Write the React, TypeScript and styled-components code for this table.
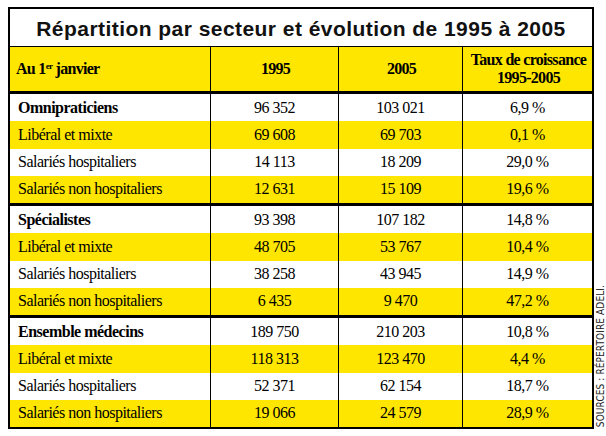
import styled, { createGlobalStyle } from 'styled-components';

const YELLOW = '#ffe600';

type Row = {
  label: string;
  y1995: string;
  y2005: string;
  rate: string;
  bold?: boolean;
};

const GROUPS: Row[][] = [
  [
    { label: 'Omnipraticiens', y1995: '96 352', y2005: '103 021', rate: '6,9 %', bold: true },
    { label: 'Libéral et mixte', y1995: '69 608', y2005: '69 703', rate: '0,1 %' },
    { label: 'Salariés hospitaliers', y1995: '14 113', y2005: '18 209', rate: '29,0 %' },
    { label: 'Salariés non hospitaliers', y1995: '12 631', y2005: '15 109', rate: '19,6 %' },
  ],
  [
    { label: 'Spécialistes', y1995: '93 398', y2005: '107 182', rate: '14,8 %', bold: true },
    { label: 'Libéral et mixte', y1995: '48 705', y2005: '53 767', rate: '10,4 %' },
    { label: 'Salariés hospitaliers', y1995: '38 258', y2005: '43 945', rate: '14,9 %' },
    { label: 'Salariés non hospitaliers', y1995: '6 435', y2005: '9 470', rate: '47,2 %' },
  ],
  [
    { label: 'Ensemble médecins', y1995: '189 750', y2005: '210 203', rate: '10,8 %', bold: true },
    { label: 'Libéral et mixte', y1995: '118 313', y2005: '123 470', rate: '4,4 %' },
    { label: 'Salariés hospitaliers', y1995: '52 371', y2005: '62 154', rate: '18,7 %' },
    { label: 'Salariés non hospitaliers', y1995: '19 066', y2005: '24 579', rate: '28,9 %' },
  ],
];

const GlobalStyle = createGlobalStyle`
  body {
    margin: 0;
    background: #fff;
  }
`;

function App() {
  return (
    <>
      <GlobalStyle />
      <Styled.Page>
        <Styled.Frame>
          <Styled.Title>Répartition par secteur et évolution de 1995 à 2005</Styled.Title>
          <Styled.Table>
            <colgroup>
              <col style={{ width: 201 }} />
              <col style={{ width: 128 }} />
              <col style={{ width: 124 }} />
              <col style={{ width: 129 }} />
            </colgroup>
            <thead>
              <tr>
                <Styled.HeadCell $align="left">
                  Au 1<sup>er</sup> janvier
                </Styled.HeadCell>
                <Styled.HeadCell>1995</Styled.HeadCell>
                <Styled.HeadCell>2005</Styled.HeadCell>
                <Styled.HeadCell $last>
                  Taux de croissance
                  <br />
                  1995-2005
                </Styled.HeadCell>
              </tr>
            </thead>
            <tbody>
              {GROUPS.map((group, g) =>
                group.map((row, i) => {
                  const thick = i === group.length - 1 && g < GROUPS.length - 1;
                  const yellow = i % 2 === 1;
                  return (
                    <Styled.Row key={`${g}-${i}`} $yellow={yellow} $thick={thick}>
                      <Styled.Cell $align="left" $bold={row.bold}>
                        {row.label}
                      </Styled.Cell>
                      <Styled.Cell>{row.y1995}</Styled.Cell>
                      <Styled.Cell>{row.y2005}</Styled.Cell>
                      <Styled.Cell $last>{row.rate}</Styled.Cell>
                    </Styled.Row>
                  );
                }),
              )}
            </tbody>
          </Styled.Table>
        </Styled.Frame>
        <Styled.Source>SOURCES : RÉPERTOIRE ADELI.</Styled.Source>
      </Styled.Page>
    </>
  );
}

const SERIF = `"Liberation Serif", "Times New Roman", serif`;

const Styled = {
  Page: styled.div`
    display: flex;
    align-items: flex-end;
    gap: 2px;
    padding: 7px 0 0 8px;
  `,
  Frame: styled.div`
    flex: 0 0 586px;
    box-sizing: border-box;
    border: 2px solid #000;
    overflow: hidden;
  `,
  Title: styled.div`
    height: 38px;
    border-bottom: 1px solid #000;
    display: flex;
    align-items: center;
    justify-content: center;
    padding-top: 2px;
    box-sizing: border-box;
    font-family: 'Liberation Sans', Arial, sans-serif;
    font-weight: 700;
    font-size: 21px;
    letter-spacing: 0.45px;
    color: #111;
  `,
  Table: styled.table`
    width: 582px;
    table-layout: fixed;
    border-collapse: separate;
    border-spacing: 0;
    color: #000;
  `,
  HeadCell: styled.th<{ $align?: 'left' | 'center'; $last?: boolean }>`
    box-sizing: border-box;
    height: 47px;
    padding: 0 4px 0 6px;
    background: ${YELLOW};
    border-bottom: 3px solid #000;
    border-right: ${(p) => (p.$last ? 'none' : '1px solid #000')};
    text-align: ${(p) => p.$align || 'center'};
    font-family: ${SERIF};
    font-size: 16px;
    font-weight: 700;
    line-height: 18px;
    letter-spacing: -0.7px;
    white-space: nowrap;

    sup {
      font-size: 9px;
      line-height: 0;
      vertical-align: 5px;
    }
  `,
  Row: styled.tr<{ $yellow?: boolean; $thick?: boolean }>`
    background: ${(p) => (p.$yellow ? YELLOW : '#fff')};

    td {
      border-bottom: ${(p) => (p.$thick ? '3px solid #000' : 'none')};
    }
  `,
  Cell: styled.td<{ $align?: 'left' | 'center'; $bold?: boolean; $last?: boolean }>`
    height: 27.25px;
    padding: 0 8px;
    border-right: ${(p) => (p.$last ? 'none' : '1px solid #000')};
    text-align: ${(p) => p.$align || 'center'};
    font-family: ${SERIF};
    font-size: 16px;
    font-weight: ${(p) => (p.$bold ? 700 : 400)};
    letter-spacing: -0.5px;
    white-space: nowrap;
  `,
  Source: styled.div`
    flex: none;
    writing-mode: vertical-rl;
    transform: rotate(180deg);
    font-family: 'DejaVu Sans', 'Liberation Sans', sans-serif;
    font-stretch: condensed;
    font-size: 10px;
    line-height: 10px;
    letter-spacing: 0.1px;
    color: #222;
    margin-bottom: 2px;
  `,
};

export default App;
